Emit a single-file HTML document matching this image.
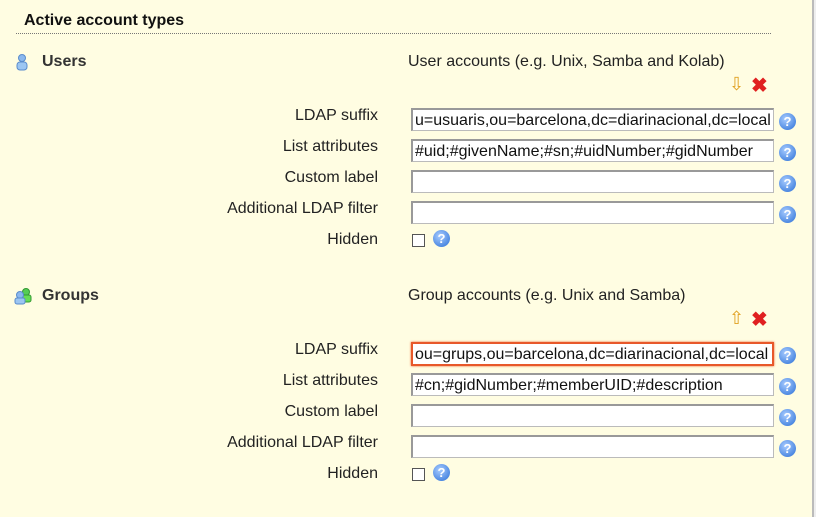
<!DOCTYPE html><html><head><style>
body{margin:0;width:816px;height:517px;background:#fffde2;font-family:"Liberation Sans",sans-serif;overflow:hidden;position:relative;color:#222}
.a{position:absolute}
.lab{position:absolute;right:438px;font-size:16px;color:#222;white-space:nowrap}
.inp{position:absolute;left:411px;width:358px;height:20px;border:1px solid #bbb;border-top:2px solid #999;border-left:2px solid #999;background:#fff;font-size:16px;line-height:22px;padding-left:2px;white-space:nowrap;overflow:hidden;color:#111}
.help{position:absolute;width:17px;height:17px;border-radius:50%;background:radial-gradient(circle at 40% 35%,#a8ccff,#2a6fd6);color:#fff;font-size:13px;font-weight:bold;text-align:center;line-height:17px}
.cb{position:absolute;left:412px;width:11px;height:11px;border:1px solid #555;background:#fff}
.h2{position:absolute;font-weight:bold;font-size:16px;color:#333}
</style></head><body>
<div class="a" style="left:812px;top:0;width:2px;height:517px;background:#bbb"></div>
<div class="a" style="left:814px;top:0;width:2px;height:517px;background:#eee"></div>
<div class="a" style="left:24px;top:12px;font-weight:bold;font-size:16px;color:#111">Active account types</div>
<div class="a" style="left:16px;top:33px;width:755px;border-top:1px dotted #777"></div>

<svg class="a" style="left:15px;top:54px" width="14" height="17"><circle cx="7" cy="4" r="3.5" fill="#8bb8ee" stroke="#5a8ccc"/><rect x="2" y="8" width="10" height="8" rx="3" fill="#9cc6f2" stroke="#5a8ccc"/></svg>
<div class="h2" style="left:42px;top:53px">Users</div>
<div class="a" style="left:408px;top:53px;font-size:16px">User accounts (e.g. Unix, Samba and Kolab)</div>
<div class="a" style="left:729px;top:74px;font-size:18px;color:#e0a020">⇩</div>
<div class="a" style="left:751px;top:73px;font-size:20px;color:#e02020;font-weight:bold">✖</div>
<div class="lab" style="top:107px">LDAP suffix</div><div class="inp" style="top:108px">u=usuaris,ou=barcelona,dc=diarinacional,dc=local</div><div class="help" style="left:779px;top:113px">?</div>
<div class="lab" style="top:138px">List attributes</div><div class="inp" style="top:139px">#uid;#givenName;#sn;#uidNumber;#gidNumber</div><div class="help" style="left:779px;top:144px">?</div>
<div class="lab" style="top:169px">Custom label</div><div class="inp" style="top:170px"></div><div class="help" style="left:779px;top:175px">?</div>
<div class="lab" style="top:200px">Additional LDAP filter</div><div class="inp" style="top:201px"></div><div class="help" style="left:779px;top:206px">?</div>
<div class="lab" style="top:231px">Hidden</div><div class="cb" style="top:234px"></div><div class="help" style="left:433px;top:230px">?</div>

<svg class="a" style="left:14px;top:288px" width="18" height="17"><circle cx="12" cy="4" r="3.5" fill="#5c5" stroke="#393"/><rect x="8" y="7" width="9" height="7" rx="2" fill="#6d5" stroke="#393"/><circle cx="6" cy="7" r="3.5" fill="#8bb8ee" stroke="#5a8ccc"/><rect x="1" y="10" width="10" height="6" rx="2" fill="#9cc6f2" stroke="#5a8ccc"/></svg>
<div class="h2" style="left:42px;top:287px">Groups</div>
<div class="a" style="left:408px;top:287px;font-size:16px">Group accounts (e.g. Unix and Samba)</div>
<div class="a" style="left:729px;top:308px;font-size:18px;color:#e0a020">⇧</div>
<div class="a" style="left:751px;top:307px;font-size:20px;color:#e02020;font-weight:bold">✖</div>
<div class="lab" style="top:341px">LDAP suffix</div><div class="inp" style="top:342px;border:2px solid #e8582a;box-shadow:0 0 2px #e8582a;width:357px">ou=grups,ou=barcelona,dc=diarinacional,dc=local</div><div class="help" style="left:779px;top:347px">?</div>
<div class="lab" style="top:372px">List attributes</div><div class="inp" style="top:373px">#cn;#gidNumber;#memberUID;#description</div><div class="help" style="left:779px;top:378px">?</div>
<div class="lab" style="top:403px">Custom label</div><div class="inp" style="top:404px"></div><div class="help" style="left:779px;top:409px">?</div>
<div class="lab" style="top:434px">Additional LDAP filter</div><div class="inp" style="top:435px"></div><div class="help" style="left:779px;top:440px">?</div>
<div class="lab" style="top:465px">Hidden</div><div class="cb" style="top:468px"></div><div class="help" style="left:433px;top:464px">?</div>
</body></html>
